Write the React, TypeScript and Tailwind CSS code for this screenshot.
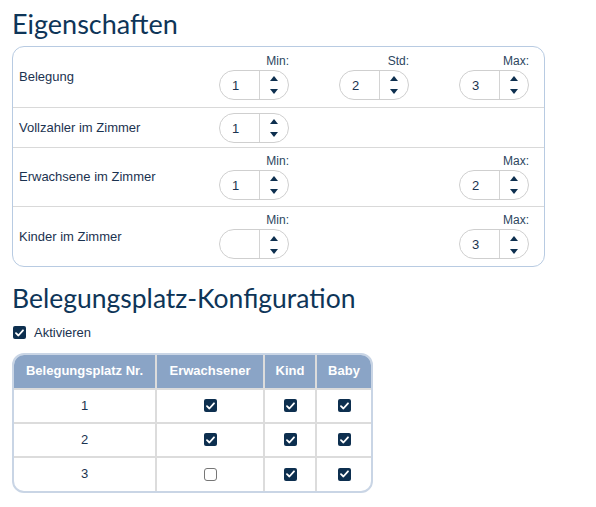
import React from 'react';

type Spin = { label?: string; value: string } | null;

interface PropRow {
  name: string;
  height: string;
  min: Spin;
  std?: Spin;
  max?: Spin;
}

const rows: PropRow[] = [
  { name: 'Belegung', height: 'h-[60px]', min: { label: 'Min:', value: '1' }, std: { label: 'Std:', value: '2' }, max: { label: 'Max:', value: '3' } },
  { name: 'Vollzahler im Zimmer', height: 'h-[40px]', min: { value: '1' } },
  { name: 'Erwachsene im Zimmer', height: 'h-[59px]', min: { label: 'Min:', value: '1' }, max: { label: 'Max:', value: '2' } },
  { name: 'Kinder im Zimmer', height: 'h-[60px]', min: { label: 'Min:', value: '' }, max: { label: 'Max:', value: '3' } },
];

const slots = [
  { nr: 1, adult: true, child: true, baby: true },
  { nr: 2, adult: true, child: true, baby: true },
  { nr: 3, adult: false, child: true, baby: true },
];

function Arrows() {
  return (
    <div className="flex w-[29px] flex-col items-center justify-center gap-[8px] border-l border-[#d4d4d4] pt-[1px]">
      <svg width="8" height="5" viewBox="0 0 8 5">
        <path d="M4 0 L8 5 L0 5 Z" fill="#0d2f4f" />
      </svg>
      <svg width="8" height="5" viewBox="0 0 8 5">
        <path d="M0 0 L8 0 L4 5 Z" fill="#0d2f4f" />
      </svg>
    </div>
  );
}

function Spinner({ spin }: { spin: Spin }) {
  if (!spin) return <div className="w-[70px]" />;
  return (
    <div className="flex w-[70px] flex-col items-end">
      {spin.label && <span className="mb-[3px] text-[12px] leading-[12px] text-[#2c4660]">{spin.label}</span>}
      <div className="flex h-[30px] w-[70px] rounded-full border border-[#cfcfcf] bg-white">
        <div className="flex flex-1 items-center pl-[12px] pt-[2px] text-[13px] text-[#1b3350]">{spin.value}</div>
        <Arrows />
      </div>
    </div>
  );
}

function Check({ on }: { on: boolean }) {
  if (!on) return <span className="block h-[13px] w-[13px] rounded-[3px] border border-[#767676] bg-white" />;
  return (
    <span className="flex h-[13px] w-[13px] items-center justify-center rounded-[2px] bg-[#0d2f4f]">
      <svg width="9" height="8" viewBox="0 0 9 8">
        <path d="M1 4.2 L3.4 6.5 L8 1.3" fill="none" stroke="#fff" strokeWidth="1.8" strokeLinecap="round" strokeLinejoin="round" />
      </svg>
    </span>
  );
}

function Cell({ children, last }: { children: React.ReactNode; last?: boolean }) {
  return (
    <td className={`p-0 align-middle ${last ? '' : 'border-r-2 border-[#dcdcdc]'}`}>
      <div className="flex items-center justify-center">{children}</div>
    </td>
  );
}

export default function App() {
  return (
    <div className="h-[507px] w-[596px] bg-white px-[12px] pt-[7px] font-['Liberation_Sans',Arial,sans-serif] text-[#1b3350]">
      {/* Eigenschaften */}
      <h1 className="font-['Lato',sans-serif] text-[27px] leading-[33px] text-[#0e3558]">Eigenschaften</h1>
      <div className="mt-[6px] w-[533px] overflow-hidden rounded-[12px] border border-[#b8cbe2]">
        {rows.map((r, i) => (
          <div key={r.name} className={`flex items-center ${r.height} ${i > 0 ? 'border-t border-[#d9d9d9]' : ''}`}>
            <div className="w-[206px] pl-[6px] text-[13px]">{r.name}</div>
            <div className="flex gap-[50px]">
              <Spinner spin={r.min} />
              <Spinner spin={r.std ?? null} />
              <Spinner spin={r.max ?? null} />
            </div>
          </div>
        ))}
      </div>

      {/* Belegungsplatz-Konfiguration */}
      <h2 className="mt-[15px] font-['Lato',sans-serif] text-[26.5px] leading-[33px] text-[#0e3558]">Belegungsplatz-Konfiguration</h2>
      <label className="mt-[8px] flex items-center gap-[8px] pl-[1px] text-[13px]">
        <Check on />
        Aktivieren
      </label>
      <div className="mt-[10px] w-[361px] overflow-hidden rounded-[12px] border-2 border-[#c9d5e5]">
        <table className="w-full border-collapse text-[13px]">
          <thead>
            <tr className="h-[34px] bg-[#8aa4c6] text-[13px] font-bold text-white">
              <th className="w-[142px] border-r-2 border-[#dcdcdc] p-0 font-bold">Belegungsplatz Nr.</th>
              <th className="w-[108px] border-r-2 border-[#dcdcdc] p-0 font-bold">Erwachsener</th>
              <th className="w-[52px] border-r-2 border-[#dcdcdc] p-0 font-bold">Kind</th>
              <th className="p-0 font-bold">Baby</th>
            </tr>
          </thead>
          <tbody>
            {slots.map((s) => (
              <tr key={s.nr} className="h-[34px] border-t-2 border-[#dcdcdc]">
                <Cell>{s.nr}</Cell>
                <Cell><Check on={s.adult} /></Cell>
                <Cell><Check on={s.child} /></Cell>
                <Cell last><Check on={s.baby} /></Cell>
              </tr>
            ))}
          </tbody>
        </table>
      </div>
    </div>
  );
}
